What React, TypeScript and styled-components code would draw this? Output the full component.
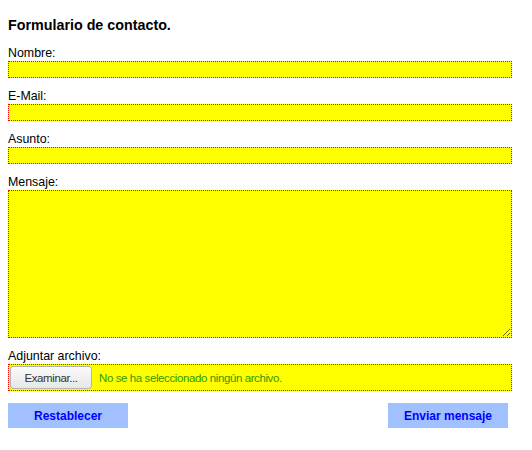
import React from "react";
import styled, { createGlobalStyle } from "styled-components";

const Global = createGlobalStyle`
  body {
    margin: 8px;
    font-family: "Liberation Sans", Arial, sans-serif;
    background: #ffffff;
    color: #000000;
  }
`;

const Form = styled.form`
  width: 500px;
  display: flex;
  flex-direction: column;
`;

const Title = styled.h1`
  margin: 9px 0 12px;
  font-size: 14.3px;
  line-height: 16px;
  font-weight: bold;
`;

const Field = styled.div`
  display: flex;
  flex-direction: column;
  margin-bottom: 10px;
`;

const Label = styled.label`
  display: block;
  font-size: 12.4px;
  line-height: 16px;
`;

const TextInput = styled.input`
  box-sizing: content-box;
  width: 100%;
  height: 15px;
  margin: 0;
  padding: 0 1px;
  border: 1px dotted #ff0000;
  background: #ffff00;
  color: #339900;
  font-family: "Liberation Sans", Arial, sans-serif;
  font-size: 12px;
  outline: none;
`;

const TextArea = styled.textarea`
  box-sizing: content-box;
  width: 100%;
  height: 146px;
  margin: 0;
  padding: 0 1px;
  border: 1px dotted #ff0000;
  background: #ffff00;
  color: #339900;
  font-family: "Liberation Sans", Arial, sans-serif;
  font-size: 12px;
  outline: none;
  display: block;
`;

const FileBox = styled.div`
  box-sizing: content-box;
  width: 100%;
  height: 25px;
  padding: 0 1px;
  border: 1px dotted #ff0000;
  background: #ffff00;
  display: flex;
  align-items: center;
  gap: 7px;
  font-family: "Liberation Sans", Arial, sans-serif;
  font-size: 11.5px;
  letter-spacing: -0.4px;
`;

const FileButton = styled.button`
  box-sizing: border-box;
  width: 82px;
  height: 23px;
  margin: 0;
  padding: 0;
  border: 1px solid #b4b4b4;
  border-radius: 3px;
  background: linear-gradient(#fbfbfb, #e6e6e6);
  color: #333333;
  font-family: inherit;
  font-size: inherit;
  letter-spacing: inherit;
  cursor: pointer;
`;

const FileText = styled.span`
  color: #339900;
`;

const ButtonRow = styled.div`
  display: flex;
  justify-content: space-between;
  margin-top: 2px;
`;

const ActionButton = styled.button`
  width: 120px;
  height: 25px;
  margin: 0;
  padding: 0;
  border: none;
  background: #a0c0ff;
  color: #0000ff;
  font-family: "Liberation Sans", Arial, sans-serif;
  font-size: 12px;
  font-weight: bold;
  cursor: pointer;
`;

export default function App() {
  return (
    <>
      <Global />
      <Form onSubmit={(e) => e.preventDefault()}>
        <Title>Formulario de contacto.</Title>
        <Field>
          <Label htmlFor="nombre">Nombre:</Label>
          <TextInput id="nombre" type="text" />
        </Field>
        <Field>
          <Label htmlFor="email">E-Mail:</Label>
          <TextInput id="email" type="text" />
        </Field>
        <Field>
          <Label htmlFor="asunto">Asunto:</Label>
          <TextInput id="asunto" type="text" />
        </Field>
        <Field>
          <Label htmlFor="mensaje">Mensaje:</Label>
          <TextArea id="mensaje" />
        </Field>
        <Field>
          <Label>Adjuntar archivo:</Label>
          <FileBox>
            <FileButton type="button">Examinar...</FileButton>
            <FileText>No se ha seleccionado ningún archivo.</FileText>
          </FileBox>
        </Field>
        <ButtonRow>
          <ActionButton type="reset">Restablecer</ActionButton>
          <ActionButton type="submit">Enviar mensaje</ActionButton>
        </ButtonRow>
      </Form>
    </>
  );
}
